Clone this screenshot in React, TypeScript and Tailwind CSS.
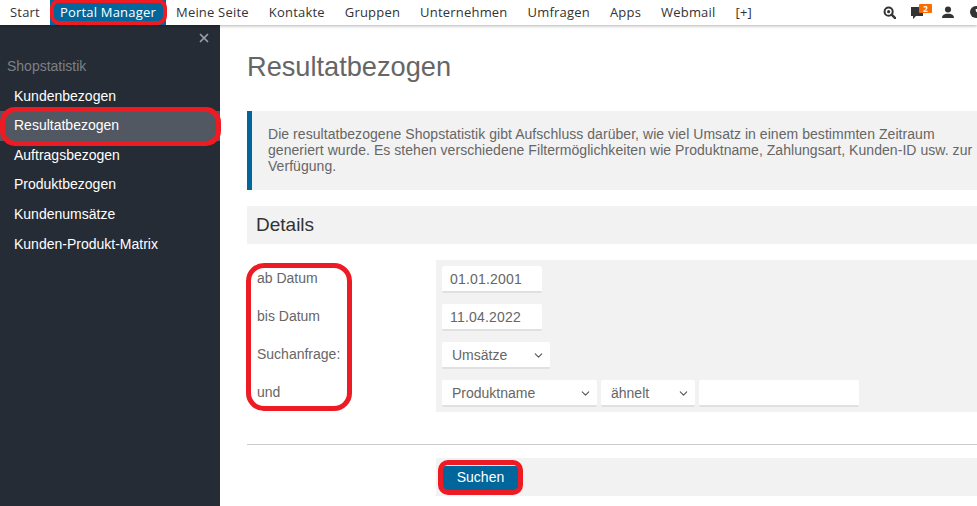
import { ChevronDown, X } from "lucide-react"

const navItems = ["Start", "Portal Manager", "Meine Seite", "Kontakte", "Gruppen", "Unternehmen", "Umfragen", "Apps", "Webmail", "[+]"]
const sideItems = ["Kundenbezogen", "Resultatbezogen", "Auftragsbezogen", "Produktbezogen", "Kundenumsätze", "Kunden-Produkt-Matrix"]

function Field({ label, width, chevron }: { label: string; width: string; chevron?: boolean }) {
  return (
    <div className={`flex h-[27px] items-center justify-between rounded-[2px] border-b-2 border-[#e0e0e0] bg-white pt-[2px] pr-[5px] text-[14px] text-[#666] ${chevron ? "pl-[10px]" : "pl-[8px] tracking-[0.2px]"} ${width}`}>
      <span>{label}</span>
      {chevron && <ChevronDown size={13} strokeWidth={2} className="text-[#555]" />}
    </div>
  )
}

function TopBar() {
  return (
    <header className="relative z-10 flex h-[25px] shrink-0 items-center justify-between bg-white shadow-[0_1px_3px_rgba(0,0,0,0.3)]">
      <nav className="flex h-full font-['Open_Sans',sans-serif] text-[13px] tracking-[0.2px] text-[#333]">
        {navItems.map((item) => (
          <a key={item} className={`flex h-full items-center px-[10px] ${item === "Portal Manager" ? "bg-[#00669c] text-white" : ""}`}>
            {item}
          </a>
        ))}
      </nav>
      <div className="relative h-full w-[95px] shrink-0 overflow-hidden">
        <svg width="13" height="13" viewBox="0 0 15 15" className="absolute left-[1px] top-[6px]">
          <circle cx="6.500" cy="6.500" r="4.700" fill="none" stroke="#333" strokeWidth="2.300" />
          <circle cx="6.500" cy="6.500" r="1.800" fill="#333" />
          <path d="M10 10l4 4" stroke="#333" strokeWidth="2.800" strokeLinecap="round" />
        </svg>
        <svg width="12" height="12" viewBox="0 0 12 12" className="absolute left-[29px] top-[7px]">
          <path d="M0 0h12v9H5l-3 3V9H0z" fill="#333" />
        </svg>
        <span className="absolute left-[37px] top-[4px] flex h-[9px] w-[13px] items-center justify-center rounded-[1px] bg-[#f96d00] font-['Open_Sans',sans-serif] text-[8px] font-bold text-white">2</span>
        <svg width="12" height="12" viewBox="0 0 13 13" className="absolute left-[60px] top-[6px]">
          <circle cx="6.500" cy="3.800" r="3.300" fill="#333" />
          <path d="M0 13c0-3 2.500-4 4.500-4.500h4C10.500 9 13 10 13 13z" fill="#333" />
        </svg>
        <svg width="12" height="12" viewBox="0 0 13 13" className="absolute left-[88px] top-[6px]">
          <circle cx="6.500" cy="6.500" r="6.500" fill="#333" />
          <path d="M6 3.500c2-1 5 .5 5.500 2.500L8 7.500 6.500 6z" fill="#fff" />
        </svg>
      </div>
    </header>
  )
}

function Sidebar() {
  return (
    <aside className="relative flex w-[220px] shrink-0 flex-col bg-[#262c35]">
      <X size={14} strokeWidth={3} className="absolute right-[9.5px] top-[5.5px] text-[#9a9ea4]" />
      <h3 className="mt-[33px] pl-[7px] text-[14px] leading-[16px] text-[#7c8086]">Shopstatistik</h3>
      <ul className="mt-[7.4px] flex flex-col">
        {sideItems.map((item) => (
          <li key={item} className={`flex h-[29.6px] items-center pl-[14px] text-[14px] text-white ${item === "Resultatbezogen" ? "bg-[#525862]" : ""}`}>
            {item}
          </li>
        ))}
      </ul>
    </aside>
  )
}

function FormRow({ label, children }: { label: string; children: React.ReactNode }) {
  return (
    <div className="flex h-[38px]">
      <div className="w-[189px] shrink-0 pt-[10px] pl-[10px] text-[14px] leading-[16px] text-[#666]">{label}</div>
      <div className="flex grow gap-[4px] bg-[#f2f2f2] pt-[6px] pl-[6px]">{children}</div>
    </div>
  )
}

export default function App() {
  return (
    <div className="relative flex h-[506px] w-[977px] flex-col overflow-hidden bg-white font-['Liberation_Sans',sans-serif]">
      <TopBar />
      <div className="flex grow">
        <Sidebar />
        <main className="grow pl-[27px]">
          <h1 className="mt-[26px] text-[27.2px] leading-[32px] text-[#666]">Resultatbezogen</h1>
          <div className="mt-[28px] h-[79px] border-l-[5px] border-[#00669c] bg-[#f2f2f2] pt-[15px] pl-[16px] text-[14px] leading-[16px] tracking-[0.05px] whitespace-nowrap text-[#666]">
            Die resultatbezogene Shopstatistik gibt Aufschluss darüber, wie viel Umsatz in einem bestimmten Zeitraum<br />
            generiert wurde. Es stehen verschiedene Filtermöglichkeiten wie Produktname, Zahlungsart, Kunden-ID usw. zur<br />
            Verfügung.
          </div>
          <h2 className="mt-[16px] flex h-[38px] items-center bg-[#f2f2f2] pl-[9px] text-[19px] text-[#333]">Details</h2>
          <div className="mt-[16px]">
            <FormRow label="ab Datum"><Field label="01.01.2001" width="w-[100px]" /></FormRow>
            <FormRow label="bis Datum"><Field label="11.04.2022" width="w-[100px]" /></FormRow>
            <FormRow label="Suchanfrage:"><Field label="Umsätze" width="w-[108px]" chevron /></FormRow>
            <FormRow label="und">
              <Field label="Produktname" width="w-[155px]" chevron />
              <Field label="ähnelt" width="w-[94px]" chevron />
              <Field label="" width="w-[160px]" />
            </FormRow>
          </div>
          <hr className="mt-[32px] border-[#ccc]" />
          <div className="mt-[13px] ml-[189px] h-[38px] bg-[#f2f2f2] pt-[7px] pl-[7px]">
            <button className="h-[24px] w-[75px] rounded-[2px] bg-[#00669c] text-[14px] text-white">Suchen</button>
          </div>
        </main>
      </div>
      {/* Red markup drawn over the screenshot */}
      <div className="absolute left-[50px] top-[-1px] z-20 h-[26px] w-[117px] rounded-[9px] border-[4px] border-[#ed1c24]" />
      <div className="absolute left-[0px] top-[107px] z-20 h-[39px] w-[221px] rounded-[15px] border-[5px] border-[#ed1c24]" />
      <div className="absolute left-[246px] top-[263px] z-20 h-[148px] w-[106px] rounded-[18px] border-[5px] border-[#ed1c24]" />
      <div className="absolute left-[438px] top-[460px] z-20 h-[35px] w-[85px] rounded-[10px] border-[5px] border-[#ed1c24]" />
    </div>
  )
}
